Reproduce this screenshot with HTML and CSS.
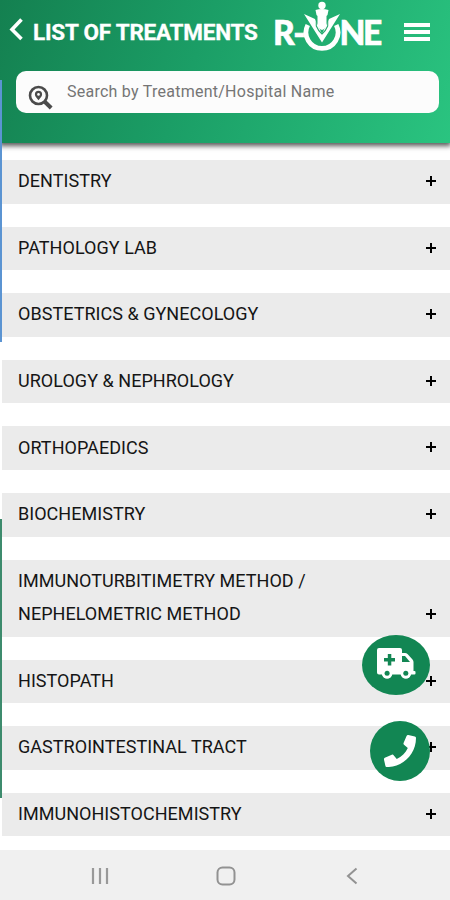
FILE: index.html
```
<!DOCTYPE html>
<html lang="en">
<head>
<meta charset="utf-8">
<title>List of Treatments</title>
<link rel="stylesheet" href="styles.css">
</head>
<body>
<div class="screen">
  <header class="header">
    <div class="bar">
      <svg class="back" width="16" height="26" viewBox="0 0 16 26"><path d="M13.500 2.500 4 12.500l9.500 9.500" fill="none" stroke="#fff" stroke-width="3.600"/></svg>
      <h1 class="title">LIST OF TREATMENTS</h1>
      <div class="logo">
        <span class="logo-text">R-</span>
        <svg class="mark" width="38" height="52" viewBox="0 0 38 52">
          <path d="M4.800 25a16 16 0 1 0 28.400 0" fill="none" stroke="#fff" stroke-width="4.800"/>
          <path d="M1 14l11 5 7 15 7-15 11-5-18 28.500z" fill="#fff"/>
          <path d="M12.500 10q6.500-2 13 0l-1 5-1 1v10q-1.500 3-4.500 4-3-1-4.500-4V16l-1-1z" fill="#fff"/>
          <path d="M13.300 17v9q2 5 5.700 8 3.700-3 5.700-8v-9" fill="none" stroke="#25a96d" stroke-width="1.100"/>
          <circle cx="19" cy="5.500" r="3.700" fill="#fff"/>
        </svg>
        <span class="logo-text logo-end">NE</span>
      </div>
      <div class="menu"><i></i><i></i><i></i></div>
    </div>
    <div class="search">
      <svg width="26" height="26" viewBox="0 0 26 26"><circle cx="10.500" cy="10.500" r="8.500" fill="none" stroke="#4b4b4b" stroke-width="2.600"/><path d="M16.500 16.500l6.700 6.500" stroke="#4b4b4b" stroke-width="4"/><path d="M10.500 5.800a3.600 3.600 0 0 0-3.600 3.600c0 2 2 3.600 3.600 5.900 1.600-2.300 3.600-3.900 3.600-5.900a3.600 3.600 0 0 0-3.600-3.600z" fill="#4b4b4b"/><circle cx="10.500" cy="9.400" r="1.300" fill="#fff"/></svg>
      <span class="placeholder">Search by Treatment/Hospital Name</span>
    </div>
  </header>
  <main class="list">
    <div class="row"><span>DENTISTRY</span><b></b></div>
    <div class="row"><span>PATHOLOGY LAB</span><b></b></div>
    <div class="row"><span>OBSTETRICS &amp; GYNECOLOGY</span><b></b></div>
    <div class="row"><span>UROLOGY &amp; NEPHROLOGY</span><b></b></div>
    <div class="row"><span>ORTHOPAEDICS</span><b></b></div>
    <div class="row"><span>BIOCHEMISTRY</span><b></b></div>
    <div class="row"><span>IMMUNOTURBITIMETRY METHOD /<br>NEPHELOMETRIC METHOD</span><b></b></div>
    <div class="row"><span>HISTOPATH</span><b></b></div>
    <div class="row"><span>GASTROINTESTINAL TRACT</span><b></b></div>
    <div class="row"><span>IMMUNOHISTOCHEMISTRY</span><b></b></div>
  </main>
  <nav class="nav">
    <svg width="18" height="18" viewBox="0 0 18 18"><path d="M2 1v16M9 1v16M16 1v16" stroke="#999" stroke-width="2.200"/></svg>
    <svg width="20" height="20" viewBox="0 0 20 20"><rect x="1.500" y="1.500" width="17" height="17" rx="5" fill="none" stroke="#929292" stroke-width="2"/></svg>
    <svg width="12" height="18" viewBox="0 0 12 18"><path d="M10.500 1.500 2 9l8.500 7.500" fill="none" stroke="#929292" stroke-width="2"/></svg>
  </nav>
  <div class="edge edge-blue"></div>
  <div class="edge edge-green"></div>
  <div class="fab ambulance">
    <svg width="40" height="32" viewBox="0 0 40 32"><path fill="#fff" fill-rule="evenodd" d="M3 0h21q2 0 2 2v3h3q1.500 0 2.500 1l5 5.500q1 1 1 2.500v9h1q1 0 1 1v1.500q0 1-1 1h-3.700a5 5 0 0 1-9.800 0H16a5 5 0 0 1-9.800 0H3q-2 0-2-2V2q0-2 2-2zM26 8v6h8l-5-6zM11.800 6v4H8v3.500h3.800v4h3.500v-4H19V10h-3.700V6z"/><circle cx="11.100" cy="25.300" r="5.300" fill="#fff"/><circle cx="29.800" cy="25.300" r="5.300" fill="#fff"/><circle cx="11.100" cy="25.300" r="2.500" fill="#128653"/><circle cx="29.800" cy="25.300" r="2.500" fill="#128653"/></svg>
  </div>
  <div class="fab phone">
    <svg width="32" height="32" viewBox="0 0 512 512"><path fill="#fff" d="M493 25 389 1c-11-3-23 3-28 14l-48 112c-4 10-1 22 7 29l61 50c-36 76-99 140-177 177l-50-61c-7-8-19-11-29-7L13 363c-11 5-16 17-14 28l24 104c3 10 12 18 24 18 256 0 465-207 465-465 0-11-8-21-19-23z"/></svg>
  </div>
</div>
</body>
</html>
```
FILE: styles.css
```
* { box-sizing: border-box; }
body { margin: 0; background: #fff; font-family: Roboto, sans-serif; }
svg { display: block; flex: none; }
.screen { position: relative; display: flex; flex-direction: column; width: 450px; height: 900px; overflow: hidden; }
.header {
  flex: none; height: 143px; padding: 0 11px 0 8px;
  background: linear-gradient(110deg, #148050 0%, #1b9e66 43%, #2ac480 100%);
  box-shadow: 0 2px 5px 1px rgba(0, 0, 0, .65);
}
.bar { display: flex; height: 71px; }
.back { margin-top: 17px; }
.title { width: 226px; margin: 17px 0 0 9px; color: #fff; font-size: 22.500px; line-height: 30px; font-weight: 700; letter-spacing: -.22px; white-space: nowrap; -webkit-text-stroke: .3px #fff; }
.logo { display: flex; width: 111px; margin-left: 14px; }
.logo-text { width: 32px; margin-top: 12px; color: #fff; font: 900 33.500px/40px Lato, sans-serif; letter-spacing: -1.500px; white-space: nowrap; -webkit-text-stroke: .6px #fff; }
.logo-end { width: 41px; margin-left: -1px; letter-spacing: -2.500px; }
.mark { margin: 0 0 0 -2.500px; }
.menu { display: flex; flex-direction: column; gap: 3px; width: 26px; margin: 23px 0 0 20px; }
.menu i { height: 4px; background: #fff; }
.search { display: flex; align-items: flex-start; height: 42px; margin-left: 8px; padding: 14px 0 0 12px; border-radius: 10px; background: #fcfcfc; }
.placeholder { margin: -3px 0 0 13px; color: #757575; font-size: 16px; line-height: 20px; letter-spacing: .25px; white-space: nowrap; }
.list { display: flex; flex: 1; flex-direction: column; gap: 23px; min-height: 0; margin: 17px 0 0 2px; }
.row { display: flex; flex: none; align-items: flex-end; justify-content: space-between; padding: 4.200px 14px 6px 16px; background: #ebebeb; color: #151515; font-size: 18px; line-height: 33.400px; letter-spacing: .04px; white-space: nowrap; }
.row b { width: 10px; height: 10px; margin-bottom: 11.500px; background: linear-gradient(#000, #000) center / 10px 2px no-repeat, linear-gradient(#000, #000) center / 2px 10px no-repeat; }
.nav { display: flex; flex: none; align-items: center; height: 50px; padding: 2px 0 0 91px; background: #f0f0f0; }
.nav svg + svg { margin-left: 107px; }
.nav svg:last-child { margin-left: 110px; }
.edge { position: absolute; left: 0; width: 2px; }
.edge-blue { top: 80px; height: 262px; background: #5b94d2; }
.edge-green { top: 519px; height: 279px; background: #3d8b6d; }
.fab { position: absolute; display: flex; align-items: center; justify-content: center; border-radius: 50%; background: #128653; }
.ambulance { left: 362px; top: 635px; width: 68px; height: 60px; }
.ambulance svg { margin-top: -2px; }
.phone { left: 370px; top: 721px; width: 60px; height: 60px; }
```
